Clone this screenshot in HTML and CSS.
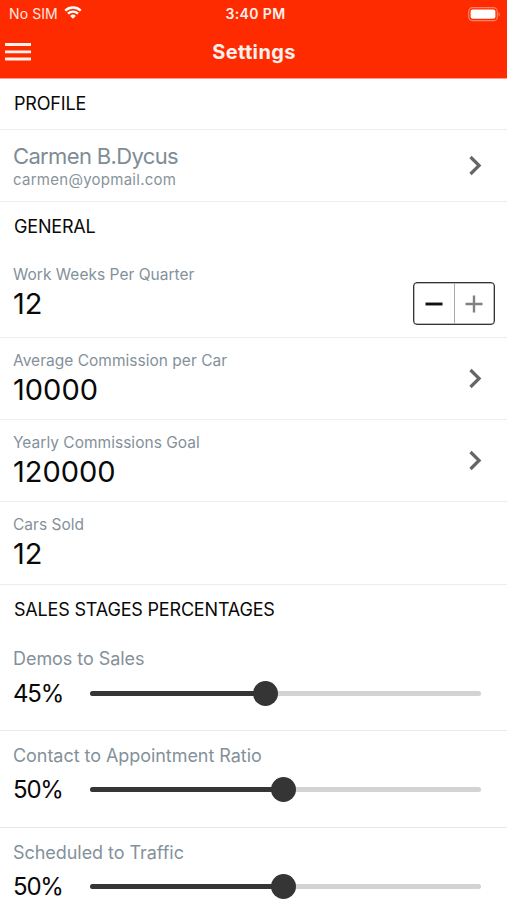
FILE: index.html
```html
<!DOCTYPE html>
<html lang="en">
<head>
<meta charset="utf-8">
<title>Settings</title>
<link rel="stylesheet" href="styles.css">
</head>
<body>
<header class="top">
  <div class="status">
    <div class="carrier"><span>No SIM</span>
      <svg class="wifi" width="18" height="13" viewBox="0 0 18 13"><g fill="none" stroke="#fff" stroke-width="2.3"><path d="M1.2 4.600a11.300 11.300 0 0 1 15.600 0"/><path d="M4 7.700a7.200 7.200 0 0 1 10 0"/></g><path d="M6.200 9.900a4 4 0 0 1 5.600 0L9 12.700z" fill="#fff"/></svg>
    </div>
    <div class="clock">3:40 PM</div>
    <svg class="battery" width="33" height="15" viewBox="0 0 33 15"><rect x=".7" y=".7" width="28.600" height="13" rx="3.800" fill="none" stroke="#ff8066" stroke-width="1.200"/><rect x="2.600" y="2.600" width="24.800" height="9.200" rx="2" fill="#fff"/><path d="M30.600 5v4.600c1.600-.7 1.600-3.900 0-4.600z" fill="#ff8066"/></svg>
  </div>
  <nav class="bar">
    <svg class="menu" width="26" height="19" viewBox="0 0 26 19"><path d="M0 2.500h26M0 9.800h26M0 17h26" stroke="#fff1ee" stroke-width="2.800"/></svg>
    <h1>Settings</h1>
  </nav>
</header>
<main>
  <h2 class="section profile-title"><span>PROFILE</span></h2>
  <section class="row profile">
    <div><div class="name">Carmen B.Dycus</div><div class="email">carmen@yopmail.com</div></div>
    <svg class="chevron" width="13" height="21" viewBox="0 0 13 21"><path d="M1.500 2l8.600 8.500-8.600 8.500"/></svg>
  </section>
  <h2 class="section general-title"><span>GENERAL</span></h2>
  <section class="row weeks">
    <div><div class="label">Work Weeks Per Quarter</div><div class="value">12</div></div>
    <div class="stepper">
      <button aria-label="Decrease"><svg width="20" height="20" viewBox="0 0 20 20"><path d="M1.500 10h17" stroke="#111" stroke-width="2.900"/></svg></button>
      <button aria-label="Increase"><svg width="20" height="20" viewBox="0 0 20 20"><path d="M1.500 10h17M10 1.500v17" stroke="#808080" stroke-width="2.400"/></svg></button>
    </div>
  </section>
  <section class="row">
    <div><div class="label">Average Commission per Car</div><div class="value">10000</div></div>
    <svg class="chevron" width="13" height="21" viewBox="0 0 13 21"><path d="M1.500 2l8.600 8.500-8.600 8.500"/></svg>
  </section>
  <section class="row">
    <div><div class="label">Yearly Commissions Goal</div><div class="value">120000</div></div>
    <svg class="chevron" width="13" height="21" viewBox="0 0 13 21"><path d="M1.500 2l8.600 8.500-8.600 8.500"/></svg>
  </section>
  <section class="row sold">
    <div><div class="label">Cars Sold</div><div class="value">12</div></div>
  </section>
  <h2 class="section sales-title"><span>SALES STAGES PERCENTAGES</span></h2>
  <section class="ratio">
    <div class="ratio-label">Demos to Sales</div>
    <div class="control"><span class="percent">45%</span><div class="track"><div class="fill" style="width:175px"></div><div class="thumb"></div></div></div>
  </section>
  <section class="ratio">
    <div class="ratio-label">Contact to Appointment Ratio</div>
    <div class="control"><span class="percent">50%</span><div class="track"><div class="fill" style="width:193.500px"></div><div class="thumb"></div></div></div>
  </section>
  <section class="ratio">
    <div class="ratio-label">Scheduled to Traffic</div>
    <div class="control"><span class="percent">50%</span><div class="track"><div class="fill" style="width:193.500px"></div><div class="thumb"></div></div></div>
  </section>
</main>
</body>
</html>
```
FILE: styles.css
```css
* { box-sizing: border-box; }
html { overflow: hidden; }
body { margin: 0; height: 900px; overflow: hidden; background: #fff; color: #090909; font-family: Inter, "Liberation Sans", sans-serif; }
h1, h2 { margin: 0; }
svg { display: block; flex: none; }
.top { height: 79px; background: #ff2b00; border-bottom: 1px solid #ff9b86; color: #fff; }
.status { height: 27px; display: grid; grid-template-columns: 1fr auto 1fr; align-items: center; padding: 1px 6px 0 9px; }
.carrier { display: flex; align-items: center; gap: 7px; font-size: 14px; line-height: 20px; color: #ffe8e2; letter-spacing: .1px; }
.wifi { margin: -3px 0 0 -1px; }
.clock { font-size: 14px; font-weight: 600; line-height: 20px; letter-spacing: .4px; padding-left: 1px; color: #fff0ec; }
.battery { justify-self: end; }
.bar { height: 49px; display: grid; grid-template-columns: 1fr auto 1fr; align-items: center; padding: 0 5px; }
.bar h1 { font-size: 20px; line-height: 28px; font-weight: 700; letter-spacing: .35px; padding-left: 1px; color: #fff0ec; }
.section { font-size: 18px; line-height: 24px; font-weight: 400; padding-left: 14px; letter-spacing: -.18px; display: flex; align-items: center; }
.profile-title { height: 51px; border-bottom: 1px solid #ededed; }
.general-title { height: 50px; }
.sales-title { height: 49px; }
.row { height: 82px; border-bottom: 1px solid #ebeeef; padding: 13px 25px 0 13px; display: flex; justify-content: space-between; }
.profile { height: 72px; }
.name { font-size: 22px; line-height: 27px; letter-spacing: -.65px; color: #7e8c95; }
.email { font-size: 15px; line-height: 20px; letter-spacing: .27px; color: #87939b; }
.chevron { margin-top: 17px; fill: none; stroke: #666; stroke-width: 3.2; }
.profile .chevron { margin-top: 12px; }
.weeks { height: 86px; padding-right: 12px; }
.sold { height: 83px; }
.label { font-size: 15.500px; line-height: 20px; letter-spacing: .02px; color: #84919a; }
.value { font-size: 29px; line-height: 38px; }
.stepper { width: 82px; height: 43px; margin-top: 17px; border: 1px solid #333; box-shadow: inset 0 0 0 .5px #777; border-radius: 4px; display: flex; }
.stepper button { flex: 1; padding: 0; border: 0; background: transparent; display: flex; align-items: center; justify-content: center; }
.stepper button + button { border-left: 1px solid #aaa; }
.ratio { height: 97px; border-bottom: 1px solid #e9e9e9; padding: 13px 26px 0 13px; }
.ratio + .ratio { padding-top: 12.500px; }
.ratio-label { font-size: 18px; line-height: 24px; letter-spacing: -.05px; color: #84919a; }
.control { display: flex; align-items: center; height: 44px; }
.percent { width: 77px; padding-top: 1px; font-size: 24px; line-height: 32px; letter-spacing: -1.200px; }
.track { flex: 1; height: 5px; border-radius: 3px; background: #d3d3d3; display: flex; align-items: center; }
.fill { height: 5px; border-radius: 3px; background: #353535; }
.thumb { width: 25px; height: 25px; margin-left: -12.500px; flex: none; border-radius: 50%; background: #353535; }
```
